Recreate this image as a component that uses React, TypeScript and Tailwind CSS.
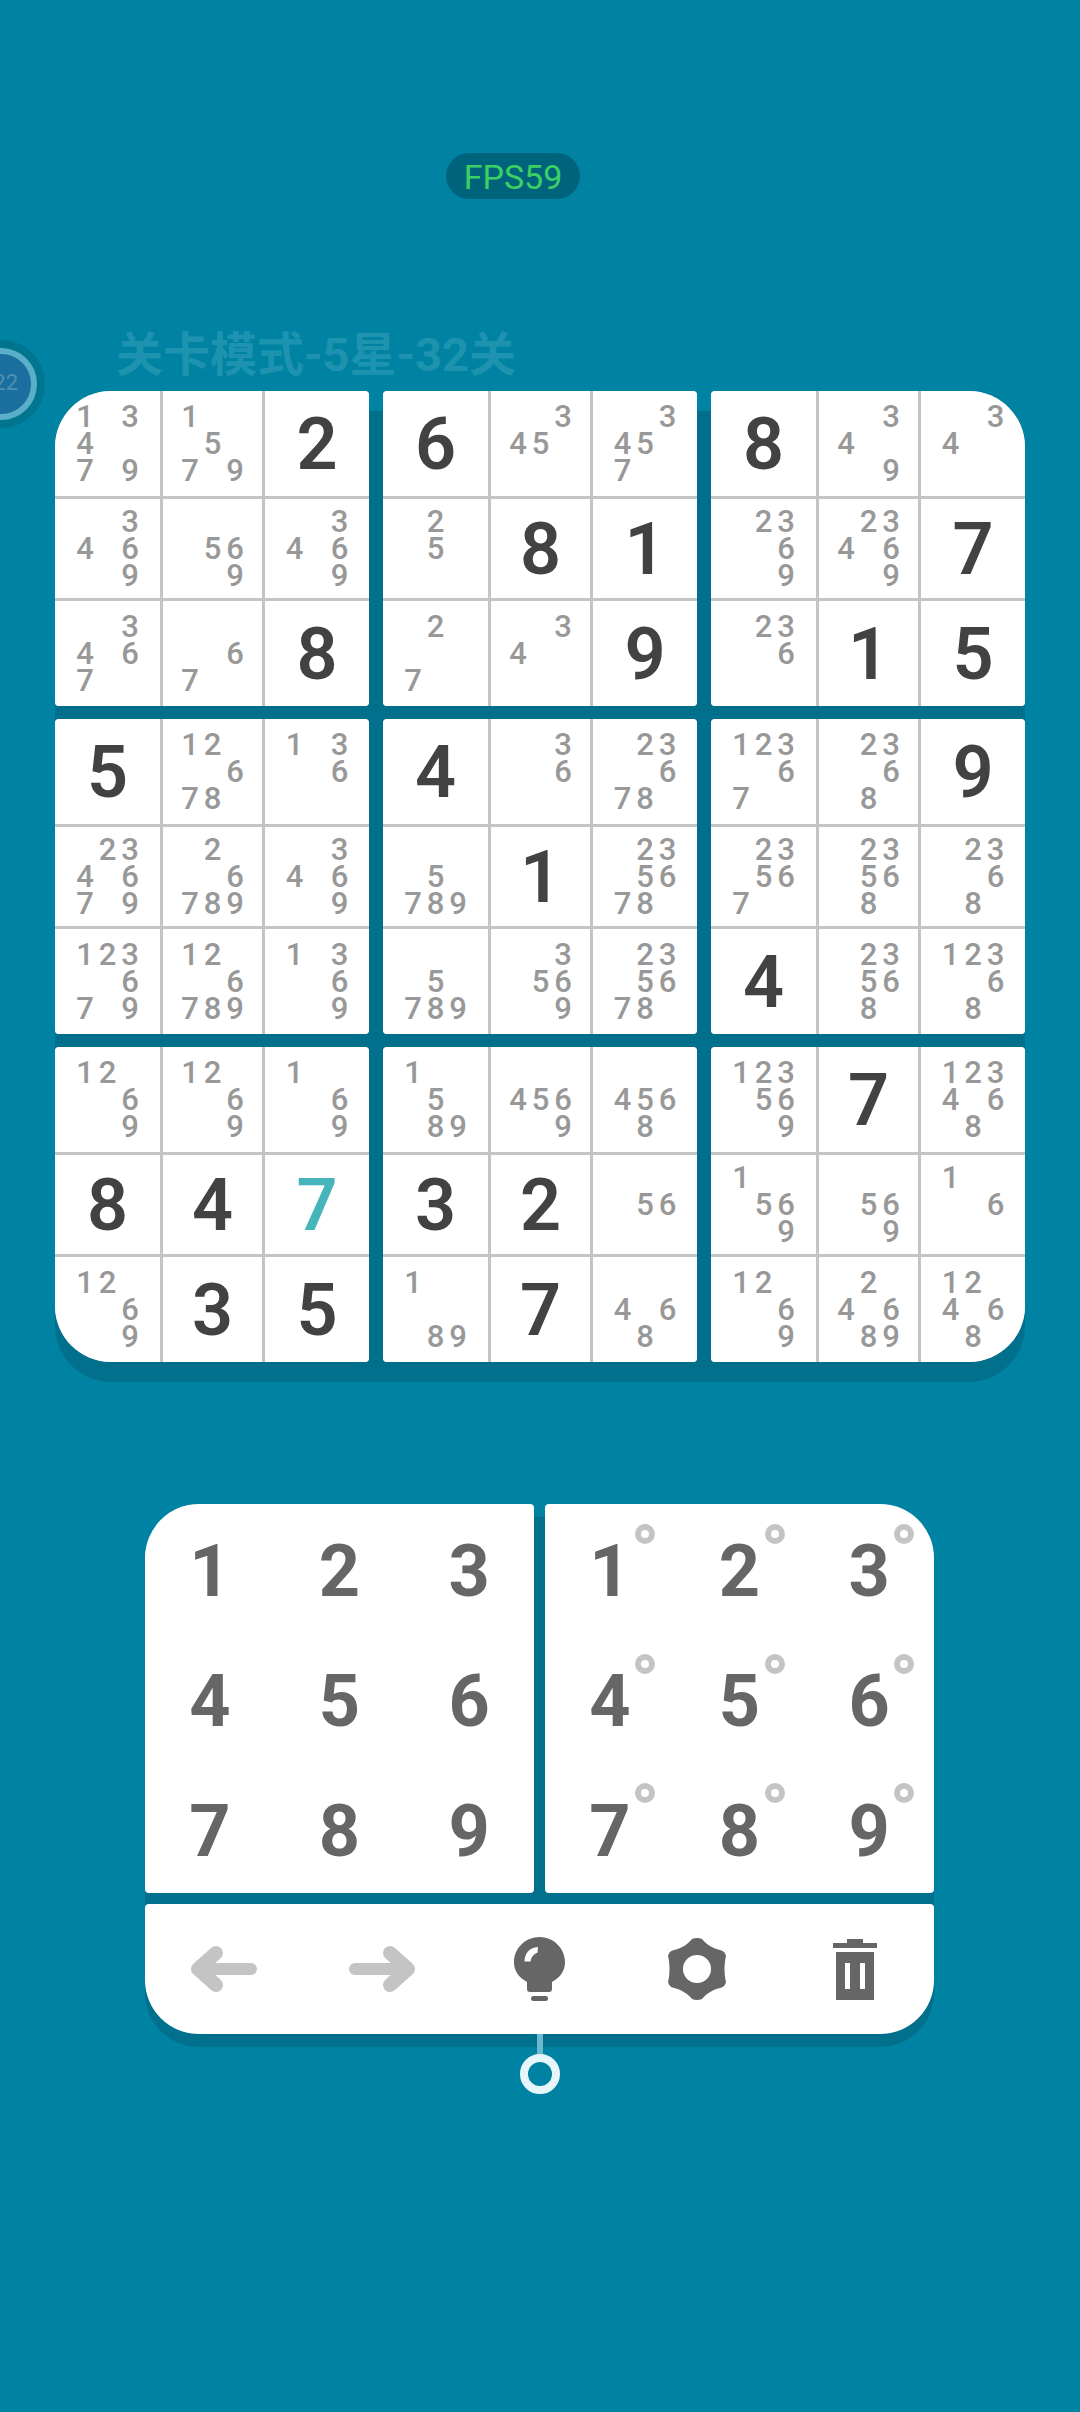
const FONT = "font-['Roboto','Noto_Sans_CJK_SC',sans-serif]";

// numbers are a big digit, strings are pencil notes
const board: (number | string)[][] = [
  ['13479', '1579', 2, 6, '345', '3457', 8, '349', '34'],
  ['3469', '569', '3469', '25', 8, 1, '2369', '23469', 7],
  ['3467', '67', 8, '27', '34', 9, '236', 1, 5],
  [5, '12678', '136', 4, '36', '23678', '12367', '2368', 9],
  ['234679', '26789', '3469', '5789', 1, '235678', '23567', '23568', '2368'],
  ['123679', '126789', '1369', '5789', '3569', '235678', 4, '23568', '12368'],
  ['1269', '1269', '169', '1589', '4569', '4568', '123569', 7, '123468'],
  [8, 4, 7, 3, 2, '56', '1569', '569', '16'],
  ['1269', 3, 5, '189', 7, '468', '1269', '24689', '12468'],
];

const boxCorners: Record<number, string> = {
  0: 'rounded-tl-[56px]',
  2: 'rounded-tr-[56px]',
  6: 'rounded-bl-[56px]',
  8: 'rounded-br-[56px]',
};

function Notes({ value }: { value: string }) {
  return (
    <div className="grid grid-cols-[22.5px_22.5px_22.5px] grid-rows-[27px_27px_27px] text-[31px] leading-[27px] font-medium text-[#989898]">
      {[1, 2, 3, 4, 5, 6, 7, 8, 9].map((n) => (
        <span key={n} className="text-center">
          {value.includes(String(n)) ? n : ''}
        </span>
      ))}
    </div>
  );
}

function Cell({ value, highlight }: { value: number | string; highlight: boolean }) {
  return (
    <div className="flex items-center justify-center bg-white">
      {typeof value === 'string' ? (
        <Notes value={value} />
      ) : (
        <span className={`pt-[3px] text-[72px] leading-none font-semibold ${highlight ? 'text-[#45b4bb]' : 'text-[#424242]'}`}>
          {value}
        </span>
      )}
    </div>
  );
}

function Box({ index }: { index: number }) {
  const rowStart = Math.floor(index / 3) * 3;
  const colStart = (index % 3) * 3;
  const cells = [0, 1, 2].flatMap((r) => [0, 1, 2].map((c) => ({ r: rowStart + r, c: colStart + c })));
  return (
    <div
      className={`grid grid-cols-[105px_99px_104px] grid-rows-[105px_99px_105px] gap-[3px] overflow-hidden rounded-[4px] bg-[#c4c4c4] ${boxCorners[index] ?? ''}`}
    >
      {cells.map(({ r, c }) => (
        <Cell key={`${r}-${c}`} value={board[r][c]} highlight={r === 7 && c === 2} />
      ))}
    </div>
  );
}

function KeyPanel({ rings, corner }: { rings: boolean; corner: string }) {
  return (
    <div className={`grid h-[389px] grid-cols-3 grid-rows-3 rounded-[4px] bg-white ${corner}`}>
      {[1, 2, 3, 4, 5, 6, 7, 8, 9].map((n) => (
        <div key={n} className="relative flex items-center justify-center">
          <span className="pt-[7px] text-[72px] leading-none font-bold text-[#666666]">{n}</span>
          {rings && (
            <span className="absolute top-[20px] left-[90px] h-[20px] w-[20px] rounded-full border-[6px] border-[#c4c4c4]" />
          )}
        </div>
      ))}
    </div>
  );
}

function ArrowIcon({ flip }: { flip?: boolean }) {
  return (
    <svg width="66" height="46" viewBox="0 0 66 46" className={flip ? '-scale-x-100' : ''} fill="none" stroke="#c4c4c4" strokeLinecap="round" strokeLinejoin="round">
      <path d="M60 23H12" strokeWidth="12" />
      <path d="M25 7L7 23L25 39" strokeWidth="14" />
    </svg>
  );
}

function BulbIcon() {
  return (
    <svg width="51" height="64" viewBox="0 0 51 64" className="ml-[1px]">
      <path
        fill="#666666"
        d="M25.5 0C39.6 0 51 11.4 51 25C51 33 47 39 41 43L38 45V52Q38 55 35 55H16Q13 55 13 52V45L10 43C4 39 0 33 0 25C0 11.4 11.4 0 25.5 0Z"
      />
      <path fill="#ffffff" d="M10.5 24.5H16.5C17 20 19.5 17 23.5 15.5L24 10C16 10.5 10.5 16 10.5 24.5Z" />
      <rect x="17" y="59" width="17" height="5" rx="2.5" fill="#666666" />
    </svg>
  );
}

function GearIcon() {
  return (
    <svg width="58" height="62" viewBox="0 0 58 62">
      <path
        fill="#666666"
        fillRule="evenodd"
        d="M24 1Q29 -1 34 1C38 6 44 10 52 12Q57 13 58 18C56 26 56 36 58 44Q57 49 52 50C44 52 38 56 34 61Q29 63 24 61C20 56 14 52 6 50Q1 49 0 44C2 36 2 26 0 18Q1 13 6 12C14 10 20 6 24 1ZM29 17A14 14 0 1 0 29 45A14 14 0 1 0 29 17Z"
      />
    </svg>
  );
}

function TrashIcon() {
  return (
    <svg width="44" height="61" viewBox="0 0 44 61" fill="#666666">
      <rect x="14" y="0" width="16" height="5" />
      <rect x="0" y="4" width="44" height="5" />
      <path fillRule="evenodd" d="M3 13H41V61H3ZM12 24V50H17V24ZM27 24V50H32V24Z" />
    </svg>
  );
}

export default function App() {
  return (
    <div className={`relative flex h-[2412px] w-[1080px] flex-col overflow-hidden bg-[#0083a2] pt-[153px] ${FONT}`}>
      {/* FPS counter */}
      <div className="ml-[446px] flex h-[46px] w-[134px] items-center justify-center rounded-full bg-[#00637c] pt-[2px] text-[34px] text-[#3ccf63]">
        FPS59
      </div>

      {/* timer bubble, cut off by the screen edge */}
      <div className="absolute top-[340px] left-[-43px] flex h-[88px] w-[88px] items-center justify-center rounded-full bg-[#00758f]">
        <div className="relative h-[72px] w-[72px] rounded-full border-[6px] border-[#5aaec8] bg-[#1a6f9e]">
          <span className="absolute top-[17px] right-[13px] text-[22px] leading-[24px] text-[#4f90b3]">22</span>
        </div>
      </div>

      <h1 className="mt-[126px] ml-[116px] h-[60px] text-[47px] leading-[60px] font-bold text-[#1e93b0]">关卡模式-5星-32关</h1>

      {/* sudoku board */}
      <div className="relative mt-[6px] ml-[55px] w-[970px]">
        <div className="absolute inset-x-0 top-[20px] -bottom-[20px] rounded-[56px] bg-[#00708c]" />
        <div className="relative grid grid-cols-3 gap-x-[14px] gap-y-[13px]">
          {[0, 1, 2, 3, 4, 5, 6, 7, 8].map((i) => (
            <Box key={i} index={i} />
          ))}
        </div>
      </div>

      {/* number pad and tools */}
      <div className="relative mt-[142px] ml-[145px] w-[789px]">
        <div className="absolute inset-x-0 top-[13px] -bottom-[13px] rounded-[54px] bg-[#00708c]" />
        <div className="relative flex flex-col gap-[11px]">
          <div className="grid grid-cols-2 gap-[11px]">
            <KeyPanel rings={false} corner="rounded-tl-[54px]" />
            <KeyPanel rings corner="rounded-tr-[54px]" />
          </div>
          <div className="grid h-[130px] grid-cols-5 place-items-center rounded-[4px] rounded-b-[54px] bg-white">
            <ArrowIcon />
            <ArrowIcon flip />
            <BulbIcon />
            <GearIcon />
            <TrashIcon />
          </div>
        </div>
      </div>

      {/* slider handle */}
      <div className="relative ml-[145px] flex w-[789px] flex-col items-center">
        <div className="h-[20px] w-[6px] bg-[#6cb8cf]" />
        <div className="h-[40px] w-[40px] rounded-full border-[8px] border-[#e6f5f9]" />
      </div>
    </div>
  );
}
